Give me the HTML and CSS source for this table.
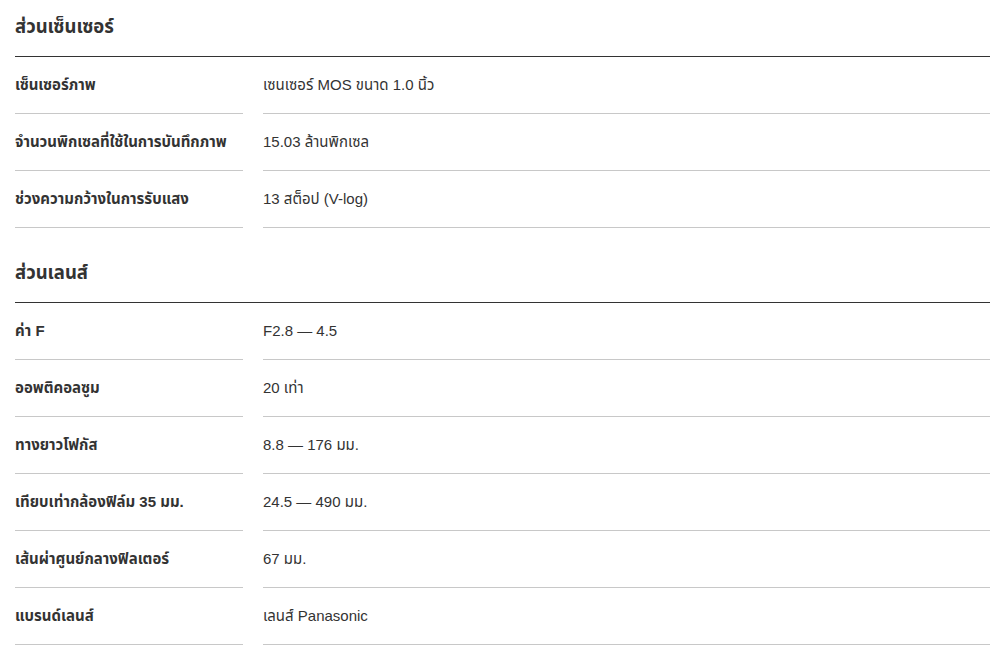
FILE: index.html
```html
<!DOCTYPE html>
<html lang="th">
<head>
<meta charset="utf-8">
<link rel="stylesheet" href="styles.css">
</head>
<body>
<div class="page">
  <section class="spec">
    <h2 class="spec-title">ส่วนเซ็นเซอร์</h2>
    <div class="spec-grid">
      <div class="label">เซ็นเซอร์ภาพ</div><div class="value">เซนเซอร์ MOS ขนาด 1.0 นิ้ว</div>
      <div class="label">จำนวนพิกเซลที่ใช้ในการบันทึกภาพ</div><div class="value">15.03 ล้านพิกเซล</div>
      <div class="label">ช่วงความกว้างในการรับแสง</div><div class="value">13 สต็อป (V-log)</div>
    </div>
  </section>
  <section class="spec">
    <h2 class="spec-title">ส่วนเลนส์</h2>
    <div class="spec-grid">
      <div class="label">ค่า F</div><div class="value">F2.8 — 4.5</div>
      <div class="label">ออพติคอลซูม</div><div class="value">20 เท่า</div>
      <div class="label">ทางยาวโฟกัส</div><div class="value">8.8 — 176 มม.</div>
      <div class="label">เทียบเท่ากล้องฟิล์ม 35 มม.</div><div class="value">24.5 — 490 มม.</div>
      <div class="label">เส้นผ่าศูนย์กลางฟิลเตอร์</div><div class="value">67 มม.</div>
      <div class="label">แบรนด์เลนส์</div><div class="value">เลนส์ Panasonic</div>
    </div>
  </section>
</div>
</body>
</html>
```
FILE: styles.css
```css
html, body {
  margin: 0;
  padding: 0;
  background: #fff;
}
body {
  font-family: "Liberation Sans", Arial, "Noto Sans Thai", sans-serif;
  color: #333;
}
.page {
  padding: 0 15px;
}
.spec + .spec {
  margin-top: 18px;
}
.spec-title {
  margin: 0;
  padding: 13px 0 15px;
  font-size: 18.5px;
  line-height: 28px;
  font-weight: bold;
  color: #333;
  border-bottom: 1px solid #333;
}
.spec-grid {
  display: grid;
  grid-template-columns: 228px 1fr;
  column-gap: 20px;
}
.label, .value {
  padding: 18px 0;
  font-size: 15px;
  line-height: 20px;
  border-bottom: 1px solid #c8c8c8;
}
.label {
  font-weight: bold;
}
```
